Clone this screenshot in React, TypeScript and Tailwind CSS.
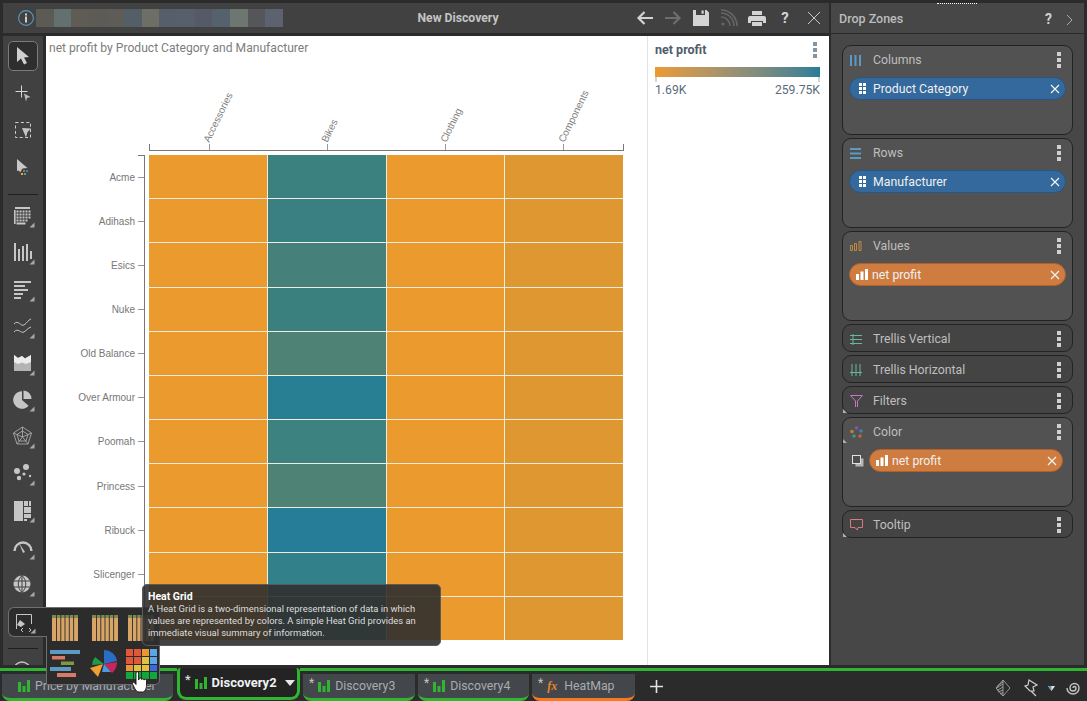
import React from "react";

const ui = "font-['Roboto',sans-serif]";

const rows = [
  ["Acme", "bg-[#3b8180]"],
  ["Adihash", "bg-[#3a8082]"],
  ["Esics", "bg-[#46807a]"],
  ["Nuke", "bg-[#3a807f]"],
  ["Old Balance", "bg-[#4e8275]"],
  ["Over Armour", "bg-[#287e92]"],
  ["Poomah", "bg-[#3b8280]"],
  ["Princess", "bg-[#4e8275]"],
  ["Ribuck", "bg-[#257d97]"],
  ["Slicenger", "bg-[#32808a]"],
  ["", "bg-[#3a8085]"],
];

const mosaic = ["#5c5a55", "#62716f", "#5f5c55", "#5c5b56", "#5e5c56", "#535e66", "#6f6e66", "#565e6a", "#565f6a", "#555a66", "#55626e", "#6e7672", "#54565a", "#5c6270"];

// every toolbar button has the little flyout triangle in its corner
function ToolIcon({ children, corner = true }: { children: React.ReactNode; corner?: boolean }) {
  return (
    <svg width="24" height="24" viewBox="0 0 24 24" fill="#c6c6c6" stroke="none">
      {children}
      {corner && <path d="M23.5 18.5v5h-5z" fill="#a8a8a8" />}
    </svg>
  );
}

function Slot({ children }: { children: React.ReactNode }) {
  return <div className="flex h-[36.9px] w-full shrink-0 items-center justify-center">{children}</div>;
}

function Toolbar() {
  return (
    <div className="flex h-[629px] w-[40px] shrink-0 flex-col items-center overflow-hidden bg-[#414141] pt-[2px]">
      <Slot>
        <div className="flex h-[30px] w-[30px] items-center justify-center rounded-[5px] border border-[#7b7b7b] bg-[#2e2e2e]">
          <svg width="18" height="20" viewBox="0 0 18 20" fill="#cfcfcf">
            <path d="M3 1v15l4-3.5 3 6 3-1.5-3-5.5 5-.5z" />
          </svg>
        </div>
      </Slot>
      <Slot>
        <ToolIcon corner={false}>
          <path d="M10 4.500h1V10h5.500v1H11v5.500h-1V11H4.500v-1H10z" fill="#d8d8d8" />
          <path d="M13 12.500l6.500 3.500-3.500 1-1 3.500z" fill="#bcbcbc" />
        </ToolIcon>
      </Slot>
      <Slot>
        <ToolIcon corner={false}>
          <rect x="4.500" y="4.500" width="15" height="15" fill="none" stroke="#cfcfcf" strokeDasharray="3 2.4" />
          <path d="M11 10l9 .5-3.500 3.500-1.500 5.500z" fill="#c4c4c4" />
        </ToolIcon>
      </Slot>
      <Slot>
        <ToolIcon corner={false}>
          <path d="M6 4l10.500 9-5 .5-2.500 4-1-2-2 .5z" fill="#c8c8c8" />
          <rect x="12" y="15" width="2" height="2" fill="#c9604a" />
          <rect x="15" y="15" width="2" height="2" fill="#4a78b8" />
          <rect x="10" y="18" width="2" height="2" fill="#d8b24a" />
          <rect x="13" y="18" width="2" height="2" fill="#4aa878" />
        </ToolIcon>
      </Slot>
      <div className="mt-[8px] mb-[3px] h-px w-[30px] shrink-0 bg-[#1f1f1f]" />
      <Slot>
        <ToolIcon>
          <path d="M4 3h15v2H4zM3 6h1.600v14H3zM5.500 6.500h2v2h-2zM8.500 6.500h2v2h-2zM11.500 6.500h2v2h-2zM14.500 6.500h2v2h-2zM17.500 6.500h2v2h-2zM5.500 9.500h2v2h-2zM8.500 9.500h2v2h-2zM11.500 9.500h2v2h-2zM14.500 9.500h2v2h-2zM17.500 9.500h2v2h-2zM5.500 12.500h2v2h-2zM8.500 12.500h2v2h-2zM11.500 12.500h2v2h-2zM14.500 12.500h2v2h-2zM17.500 12.500h2v2h-2zM5.500 15.500h2v2h-2zM8.500 15.500h2v2h-2zM11.500 15.500h2v2h-2zM14.500 15.500h2v2h-2zM5.500 18.500h9v2h-9z" />
        </ToolIcon>
      </Slot>
      <Slot>
        <ToolIcon>
          <path d="M3 2h2v18H3zM7 8h2v12H7zM11 5h2v15h-2zM15 3h2v17h-2zM19 10h2v8h-2z" />
        </ToolIcon>
      </Slot>
      <Slot>
        <ToolIcon>
          <path d="M3 3h17v2H3zM3 7h11v2H3zM3 11h14v2H3zM3 15h9v2H3zM3 19h7v2H3z" />
        </ToolIcon>
      </Slot>
      <Slot>
        <ToolIcon>
          <path d="M3 9c4-5 7 3 10 1s4-5 7-6M3 17c4-5 7 2 10 0s4-4 7-5" fill="none" stroke="#c6c6c6" strokeWidth="1" />
        </ToolIcon>
      </Slot>
      <Slot>
        <ToolIcon>
          <path d="M3 3l4 3 4-2 3 2.500L20 3v16H3z" fill="#b4b4b4" />
          <path d="M3 3l4 3 4-2 3 2.500L20 3v7l-5 2-4-1.500-4 1.500-4-2z" fill="#ececec" />
        </ToolIcon>
      </Slot>
      <Slot>
        <ToolIcon>
          <path d="M11 3.200v8.800l6.600 5.800A8.800 8.800 0 1 1 11 3.200z" />
          <path d="M12.500 2.400a8.600 8.600 0 0 1 8 8.600h-8z" />
        </ToolIcon>
      </Slot>
      <Slot>
        <ToolIcon>
          <path d="M11.500 2l9 6-3.500 11H6L2.500 8zM11.500 6l5.500 3.500-2 6.500H8L6 9.500zM11.500 2v10M2.500 8l9 4 9-4M6 19l5.500-7 5.500 7" fill="none" stroke="#a8a8a8" strokeWidth="0.9" />
        </ToolIcon>
      </Slot>
      <Slot>
        <ToolIcon>
          <circle cx="6" cy="9" r="3" />
          <circle cx="15" cy="5" r="3" />
          <circle cx="8" cy="16" r="2.200" />
          <circle cx="13" cy="12" r="1.600" />
          <circle cx="19" cy="14" r="1.200" />
        </ToolIcon>
      </Slot>
      <Slot>
        <ToolIcon>
          <path d="M3 2h9v20H3zM13 2h4v5h-4zM18 2h2v5h-2zM13 8h7v6h-7zM13 15h7v4h-7zM13 20h3v2h-3z" />
        </ToolIcon>
      </Slot>
      <Slot>
        <ToolIcon>
          <path d="M3.500 15a8.500 8.500 0 0 1 17 0" fill="none" stroke="#c6c6c6" strokeWidth="2.400" />
          <path d="M8 7l6 9-2 1z" />
        </ToolIcon>
      </Slot>
      <Slot>
        <ToolIcon>
          <circle cx="11" cy="11" r="8.500" />
          <path d="M11 2.500c-5 5-5 12 0 17M11 2.500c5 5 5 12 0 17M11 2.500v17M2.500 8h17M2.500 14h17" fill="none" stroke="#414141" strokeWidth="1" />
        </ToolIcon>
      </Slot>
      <Slot>
        <span />
      </Slot>
      <div className="mt-[8px] mb-[3px] h-px w-[30px] shrink-0 bg-[#1f1f1f]" />
      <Slot>
        <ToolIcon>
          <circle cx="11" cy="11" r="8" fill="none" stroke="#c6c6c6" strokeWidth="1.400" />
        </ToolIcon>
      </Slot>
    </div>
  );
}

function Chart() {
  const cols = ["Accessories", "Bikes", "Clothing", "Components"];
  return (
    <div className="flex h-[629px] w-[783px] bg-white">
      <div className="w-[601px] shrink-0">
        <div className={`${ui} pl-[3px] pt-[4px] text-[12.1px] leading-[17px] text-[#7d7d7d]`}>
          net profit by Product Category and Manufacturer
        </div>
        <div className="ml-[103px] mt-[87px] w-[475px] font-['Liberation_Sans',sans-serif] text-[10px] text-[#808080]">
          <div className="grid h-[7px] grid-cols-4 border-x border-b border-[#777]">
            {cols.map((c) => (
              <div key={c} className="relative flex justify-center">
                <div className="h-full w-px bg-[#999]" />
                <span className="absolute bottom-[6px] left-[calc(50%+2px)] origin-bottom-left -rotate-[64deg] whitespace-nowrap leading-none">
                  {c}
                </span>
              </div>
            ))}
          </div>
        </div>
        <div className="mt-[4px] flex">
          <div className="relative w-[99px] shrink-0 border-r border-[#777] font-['Liberation_Sans',sans-serif] text-[10px] text-[#777]">
            <div className="absolute right-0 top-0 h-px w-[6px] bg-[#777]" />
            {rows.map(([name]) => (
              <div key={name || "last"} className="flex h-[44.15px] items-center justify-end gap-[3px]">
                <span>{name}</span>
                <div className="h-px w-[6px] bg-[#999]" />
              </div>
            ))}
          </div>
          <div className="ml-[4px] grid h-[485px] w-[474px] shrink-0 grid-cols-4 gap-px bg-[#f1ece2]">
            {rows.map(([name, color]) => (
              <React.Fragment key={name || "last"}>
                <div className="bg-[#eb9a2e]" />
                <div className={color} />
                <div className="bg-[#eb9a2e]" />
                <div className="bg-[#df9732]" />
              </React.Fragment>
            ))}
          </div>
        </div>
      </div>
      <div className={`${ui} h-full w-[182px] border-l border-[#e4e4e4] pl-[7px] pr-[12px] pt-[5px]`}>
        <div className="flex items-center justify-between">
          <span className="text-[12.5px] leading-[17px] font-bold text-[#4f5d6b]">net profit</span>
          <Kebab color="#8394a3" />
        </div>
        <div className="mt-[9px] h-[10px] w-[165px] bg-gradient-to-r from-[#eb9a2e] to-[#257d97]" />
        <div className="flex w-[165px] justify-between">
          <div className="h-[5px] w-[2px] bg-[#d5d5d5]" />
          <div className="h-[5px] w-[2px] bg-[#d5d5d5]" />
        </div>
        <div className="flex w-[165px] justify-between text-[12.2px] leading-[16px] text-[#5b6b7b]">
          <span>1.69K</span>
          <span>259.75K</span>
        </div>
      </div>
    </div>
  );
}

function Kebab({ color = "#d0d0d0" }: { color?: string }) {
  return (
    <svg width="4" height="16" viewBox="0 0 4 16" fill={color}>
      <rect y="0" width="4" height="4" />
      <rect y="6" width="4" height="4" />
      <rect y="12" width="4" height="4" />
    </svg>
  );
}

function Header() {
  return (
    <div className={`${ui} relative flex h-[30px] items-center bg-[#414141] pl-[15px] pr-[8px]`}>
      <svg width="16" height="16" viewBox="0 0 16 16" className="shrink-0">
        <circle cx="8" cy="8" r="7.400" fill="none" stroke="#5b97bf" strokeWidth="1.100" />
        <rect x="7" y="3.500" width="2" height="2" fill="#cfcfcf" />
        <rect x="7" y="6.500" width="2" height="6" fill="#cfcfcf" />
      </svg>
      <div className="ml-[2px] flex h-[18px] w-[247px] shrink-0">
        {mosaic.map((c) => (
          <div key={c} className="h-full flex-1" style={{ background: c }} />
        ))}
      </div>
      <div className="flex-1 pr-[3px] pt-[1px] text-center text-[12.2px] font-bold text-[#c4c4c4]">New Discovery</div>
      <div className="flex items-center gap-[10px]">
        <svg width="18" height="16" viewBox="0 0 18 16" fill="none" stroke="#d2d2d2" strokeWidth="2.200">
          <path d="M17 8H3M8.500 2L2.500 8l6 6" />
        </svg>
        <svg width="18" height="16" viewBox="0 0 18 16" fill="none" stroke="#6d6d6d" strokeWidth="2.200">
          <path d="M1 8h14M9.500 2l6 6-6 6" />
        </svg>
        <svg width="18" height="18" viewBox="0 0 18 18" fill="#d4d4d4">
          <path d="M1 1h3v5h9V1h1.500L17 3.500V17H1zM9.500 1.500h2.200v3.200H9.500z" />
        </svg>
        <svg width="18" height="18" viewBox="0 0 18 18" fill="none" stroke="#666" strokeWidth="1.600">
          <circle cx="3" cy="15" r="1.600" fill="#666" stroke="none" />
          <path d="M1 8a9 9 0 0 1 9 9M1 4a13 13 0 0 1 13 13M1 1a16 16 0 0 1 16 16" />
        </svg>
        <svg width="18" height="17" viewBox="0 0 18 17" fill="#d4d4d4">
          <path d="M4 1h10v4H4zM2 6h14a2 2 0 0 1 2 2v5h-3v-2H3v2H0V8a2 2 0 0 1 2-2zM4 12h10v4H4z" />
        </svg>
        <span className="w-[18px] text-center text-[15px] leading-none font-bold text-[#d4d4d4]">?</span>
        <svg width="14" height="14" viewBox="0 0 14 14" stroke="#c8c8c8" strokeWidth="1" className="ml-[3px]">
          <path d="M1 1l12 12M13 1L1 13" />
        </svg>
      </div>
    </div>
  );
}

function Pill({ label, tone, grip }: { label: string; tone: "blue" | "orange"; grip?: boolean }) {
  const colors = tone === "blue" ? "bg-[#33699c] border-[#2a5580]" : "bg-[#cf7c41] border-[#b2602c]";
  return (
    <div className={`flex h-[23px] flex-1 items-center rounded-full border pl-[7px] pr-[5px] ${colors}`}>
      {grip ? (
        <svg width="9" height="11" viewBox="0 0 9 11" fill="#fff" className="mr-[6px] ml-[1px]">
          <path d="M1 0h3v3H1zM5 0h3v3H5zM1 4h3v3H1zM5 4h3v3H5zM1 8h3v3H1zM5 8h3v3H5z" />
        </svg>
      ) : (
        <svg width="12" height="11" viewBox="0 0 12 11" fill="#fff" className="mr-[4px] ml-[-1px]">
          <path d="M0 5h3v6H0zM4.500 2.500h3V11h-3zM9 0h3v11H9z" />
        </svg>
      )}
      <span className="flex-1 pt-[1px] text-[12.3px] leading-none text-[#f0f0f0]">{label}</span>
      <svg width="10" height="10" viewBox="0 0 10 10" stroke="#f4f4f4" strokeWidth="1.200">
        <path d="M1 1l8 8M9 1L1 9" />
      </svg>
    </div>
  );
}

function Zone({
  label,
  icon,
  children,
  corner,
}: {
  label: string;
  icon: React.ReactNode;
  children?: React.ReactNode;
  corner?: boolean;
}) {
  const big = !!children;
  return (
    <div className={`relative rounded-[9px] border border-[#232323] px-[6px] ${big ? "h-[90px] bg-[#525252]" : "h-[28px] bg-[#444444]"}`}>
      <div className="flex h-[28px] items-center">
        <div className="flex w-[24px] shrink-0 items-center pl-[1px]">{icon}</div>
        <span className="flex-1 text-[12.3px] text-[#bfbfbf]">{label}</span>
        <div className="pr-[5px]">
          <Kebab />
        </div>
      </div>
      {big && <div className="mt-[3px] flex items-center">{children}</div>}
      {corner && (
        <div className={`absolute left-0 h-0 w-0 border-t-[4px] border-r-[4px] border-l-[4px] border-t-transparent border-r-transparent border-l-[#b0b0b0] ${big ? "top-[21px]" : "bottom-0"}`} />
      )}
    </div>
  );
}

function DropZones() {
  return (
    <div className={`${ui} relative h-[662px] w-[253px] shrink-0 bg-[#474747]`}>
      <div className="absolute top-0 left-[106px] h-[2px] w-[40px] border-t border-dotted border-white" />
      <div className="flex h-[31px] items-center border-b border-[#2a2a2a] pl-[8px] pr-[11px] pt-[3px]">
        <span className="flex-1 text-[12.5px] font-medium text-[#bcbcbc]">Drop Zones</span>
        <span className="mr-[14px] text-[14px] font-bold text-[#d0d0d0]">?</span>
        <svg width="7" height="12" viewBox="0 0 7 12" fill="none" stroke="#a8a8a8" strokeWidth="1">
          <path d="M1 1l5 5-5 5" />
        </svg>
      </div>
      <div className="ml-[11px] mt-[11px] flex w-[231px] flex-col gap-[3px]">
        <Zone
          label="Columns"
          icon={
            <svg width="11" height="11" viewBox="0 0 11 11" fill="#5c9ac4">
              <path d="M0 0h2v11H0zM4.500 0h2v11h-2zM9 0h2v11H9z" />
            </svg>
          }
        >
          <Pill label="Product Category" tone="blue" grip />
        </Zone>
        <Zone
          label="Rows"
          icon={
            <svg width="11" height="11" viewBox="0 0 11 11" fill="#5c9ac4">
              <path d="M0 0h11v2H0zM0 4.500h11v2H0zM0 9h11v2H0z" />
            </svg>
          }
        >
          <Pill label="Manufacturer" tone="blue" grip />
        </Zone>
        <Zone
          label="Values"
          icon={
            <svg width="12" height="10" viewBox="0 0 12 10" fill="none" stroke="#c08a45" strokeWidth="1">
              <path d="M.5 4.500h2v5h-2zM4.500 2.500h2v7h-2zM9 .5h2v9H9z" />
            </svg>
          }
        >
          <Pill label="net profit" tone="orange" />
        </Zone>
        <Zone
          label="Trellis Vertical"
          icon={
            <svg width="12" height="11" viewBox="0 0 12 11" fill="none" stroke="#69b79c" strokeWidth="1">
              <path d="M0 1.500h12M0 5.500h12M0 9.500h12M3 0v11" />
            </svg>
          }
        />
        <Zone
          label="Trellis Horizontal"
          icon={
            <svg width="12" height="12" viewBox="0 0 12 12" fill="none" stroke="#69b79c" strokeWidth="1">
              <path d="M2 0v12M6 0v12M10 0v12M0 8.500h12" />
            </svg>
          }
        />
        <Zone
          label="Filters"
          corner
          icon={
            <svg width="13" height="12" viewBox="0 0 13 12" fill="none" stroke="#c278c4" strokeWidth="1">
              <path d="M.5.5h12L7.500 6v6M5.500 12V6L.5.5" />
            </svg>
          }
        />
        <Zone
          label="Color"
          corner
          icon={
            <svg width="13" height="12" viewBox="0 0 13 12">
              <circle cx="6.500" cy="2" r="1.800" fill="#7e5aa8" />
              <circle cx="11" cy="5" r="1.800" fill="#4d7ab0" />
              <circle cx="2" cy="5.500" r="1.800" fill="#b8843c" />
              <circle cx="10" cy="10" r="1.800" fill="#c4623c" />
              <circle cx="4" cy="10" r="1.800" fill="#4f9278" />
            </svg>
          }
        >
          <svg width="12" height="12" viewBox="0 0 12 12" className="mr-[5px] ml-[3px] shrink-0">
            <rect x="3.500" y="3.500" width="8" height="8" fill="#b4b4b4" />
            <rect x=".5" y=".5" width="8" height="8" fill="#4d4d4d" stroke="#e2e2e2" />
          </svg>
          <div className="mr-[3px] flex flex-1">
            <Pill label="net profit" tone="orange" />
          </div>
        </Zone>
        <Zone
          label="Tooltip"
          corner
          icon={
            <svg width="13" height="12" viewBox="0 0 13 12" fill="none" stroke="#d77b7b" strokeWidth="1">
              <path d="M.5.5h12v8H8l-1 2.500-2-2.500H.5z" />
            </svg>
          }
        />
      </div>
    </div>
  );
}

function BarIcon() {
  return (
    <svg width="12" height="12" viewBox="0 0 12 12" fill="#2fb52f" className="shrink-0">
      <path d="M0 2h3v10H0zM4.500 6h3v6h-3zM9 0h3v12H9z" />
    </svg>
  );
}

function Tab({ label, widthClass, orange, star = true }: { label: string; widthClass: string; orange?: boolean; star?: boolean }) {
  return (
    <div
      className={`flex h-[27px] shrink-0 items-center rounded-b-[8px] border-b-[3px] bg-[#43464a] ${star ? "pl-[6px]" : "pl-[16px]"} ${widthClass} ${orange ? "border-[#f47a20]" : "border-[#2fb52f]"}`}
    >
      {star && <span className="mr-[4px] mt-[-6px] text-[12px] leading-none text-[#c4c4c4]">*</span>}
      {orange ? (
        <span className="mr-[7px] font-['Liberation_Serif',serif] text-[12px] font-bold italic leading-none text-[#e8842c]">fx</span>
      ) : (
        <span className="mr-[5px]">
          <BarIcon />
        </span>
      )}
      <span className="whitespace-nowrap text-[12.3px] text-[#a9acb0]">{label}</span>
    </div>
  );
}

function TabBar() {
  return (
    <div className={`${ui} mt-[3px] flex h-[33px]`}>
      <div className="w-[177px] shrink-0 border-t-[3px] border-[#2fb52f] pl-[2px] pt-[3px]">
        <Tab label="Price by Manufacturer" widthClass="w-[171px]" star={false} />
      </div>
      <div className="flex h-[32px] w-[123px] shrink-0 items-center rounded-b-[9px] rounded-t-[4px] border-x-[3px] border-b-[3px] border-[#2fb52f] bg-[#232323] pl-[5px]">
        <span className="mr-[4px] mt-[-6px] text-[13px] leading-none text-[#e8e8e8]">*</span>
        <span className="mr-[5px]">
          <BarIcon />
        </span>
        <span className="text-[13px] font-bold text-[#eef1f4]">Discovery2</span>
        <svg width="10" height="6" viewBox="0 0 10 6" fill="#e8e8e8" className="ml-[8px]">
          <path d="M0 0h10L5 6z" />
        </svg>
      </div>
      <div className="flex flex-1 items-start gap-[3px] border-t-[3px] border-[#2fb52f] pl-[3px] pt-[3px]">
        <Tab label="Discovery3" widthClass="w-[112px]" />
        <Tab label="Discovery4" widthClass="w-[111px]" />
        <Tab label="HeatMap" widthClass="w-[103px]" orange />
        <svg width="13" height="13" viewBox="0 0 13 13" stroke="#e4e4e4" strokeWidth="1.600" className="ml-[12px] mt-[6px]">
          <path d="M6.500 0v13M0 6.500h13" />
        </svg>
        <div className="ml-auto mr-[6px] mt-[5px] flex items-center">
          <svg width="16" height="18" viewBox="0 0 16 18" fill="none" stroke="#b0b0b0" strokeWidth="0.800">
            <path d="M8 1v16M8 1l7 8-7 8M8 1L1 9l7 8M2 7.500L8 3M1 9.500L8 5M2 11.500L8 8M3 13L8 11M5 15l3-1.500" />
          </svg>
          <svg width="18" height="18" viewBox="0 0 18 18" fill="none" stroke="#cfcfcf" strokeWidth="1.200" className="ml-[11px]">
            <path d="M7 1l8 5-4 2 1 4-4 0-5-5 3-1zM9 12l5 5" />
          </svg>
          <svg width="7" height="5" viewBox="0 0 7 5" className="ml-[8px]">
            <path d="M0 0h7L3.500 5z" fill="#e8e8e8" />
            <path d="M0 0h3.500v5z" fill="#5b97bf" />
          </svg>
          <svg width="16" height="18" viewBox="0 0 16 18" fill="none" stroke="#c4c4c4" strokeWidth="1.400" className="ml-[10px]">
            <path d="M8 9a1.500 1.500 0 0 1 3 0a3 3 0 0 1-6 0a4.500 4.500 0 0 1 9 0a6 6 0 0 1-12 0" />
          </svg>
        </div>
      </div>
    </div>
  );
}

function MiniBars() {
  return (
    <svg width="26" height="26" viewBox="0 0 26 26">
      <rect width="26" height="3" fill="#7d8a4f" />
      <rect y="3" width="26" height="23" fill="#d9a566" />
      <path d="M4.500 0v26M8.800 0v26M13 0v26M17.300 0v26M21.600 0v26" stroke="#2b2b2b" strokeWidth="0.900" />
    </svg>
  );
}

function Flyout() {
  const heat = [
    "#e0573a", "#e0573a", "#e89a30", "#5aa6e8",
    "#e0573a", "#e0573a", "#e0c23c", "#5aa6e8",
    "#f0923a", "#e0c23c", "#e0c23c", "#3d68e0",
    "#10a83c", "#10a83c", "#10a83c", "#10a83c",
  ];
  return (
    <>
      <div className="absolute left-[46px] top-[607px] z-10 flex h-[78px] w-[114px] flex-col gap-[8px] rounded-br-[5px] rounded-tr-[5px] border border-[#6f6f6f] bg-[#2c2c2c] pl-[5px] pt-[7px]">
        <div className="flex gap-[14px]">
          <MiniBars />
          <MiniBars />
          <div className="-ml-[4px]">
            <MiniBars />
          </div>
        </div>
        <div className="-ml-[2px] flex items-center gap-[7px]">
          <svg width="32" height="30" viewBox="0 0 32 30">
            <rect x="0" y="1" width="30" height="4" fill="#5c9ac4" />
            <rect x="2" y="7" width="13" height="3.500" fill="#d77a68" />
            <rect x="11" y="12.500" width="13" height="3.500" fill="#7f9a3c" />
            <rect x="0" y="18" width="21" height="4" fill="#5c9ac4" />
            <rect x="7" y="24" width="19" height="4" fill="#d77a68" />
          </svg>
          <svg width="30" height="30" viewBox="0 0 30 30">
            <path d="M15 15V1a13 13 0 0 1 13 11z" fill="#2b6cc4" />
            <path d="M15 15l13-2a14 14 0 0 1-5 11z" fill="#c9245c" />
            <path d="M15 15l7 8-9 0z" fill="#4a9ae0" />
            <path d="M14 15L1 19l8 9z" fill="#f0a030" />
            <path d="M15 15L6 8a14 14 0 0 0-3 8z" fill="#1f9a4a" />
          </svg>
          <div className="grid h-[30px] w-[31px] grid-cols-4 gap-px">
            {heat.map((c, i) => (
              <div key={i} style={{ background: c }} />
            ))}
          </div>
        </div>
      </div>
      <div className="absolute left-[8px] top-[607px] z-20 flex h-[30px] w-[39px] items-center justify-center rounded-l-[6px] border border-r-0 border-[#6f6f6f] bg-[#2c2c2c] pr-[8px]">
        <svg width="24" height="24" viewBox="0 0 24 24" fill="none" stroke="#c6c6c6">
          <path d="M4.500 19V4.500h15V14" strokeWidth="1" />
          <path d="M5 15l3-5 5 4-4 3z" fill="#c6c6c6" stroke="none" />
          <path d="M11 18l-2 2 2 2M17 18l2 2-2 2" strokeWidth="1" />
          <path d="M23.500 18.500v5h-5z" fill="#a8a8a8" stroke="none" />
        </svg>
      </div>
      <div className={`${ui} absolute left-[142px] top-[584px] z-30 h-[62px] w-[299px] rounded-[5px] border border-[#5a5a5a] bg-[#2f2f2f]/90 px-[5px] pt-[6px] text-[9.4px] leading-[12px] text-[#dedede]`}>
        <div className="text-[10.5px] font-bold text-white">Heat Grid</div>
        <div>
          A Heat Grid is a two-dimensional representation of data in which values are represented by colors. A simple Heat Grid provides an immediate visual summary of information.
        </div>
      </div>
      <svg width="18" height="22" viewBox="0 0 18 22" className="absolute left-[131px] top-[671px] z-40">
        <path
          d="M5 2a1.300 1.300 0 0 1 2.600 0v7l.4-1a1.200 1.200 0 0 1 2.400.2l.2.3a1.200 1.200 0 0 1 2.300.4l.2.200a1.200 1.200 0 0 1 2.400.5v5c0 3-1.500 6.400-4 6.400H8c-2 0-3-1.500-4-3L1.500 13c-.8-1.400.9-2.400 2-1.300L5 13.500z"
          fill="#fff"
          stroke="#111"
          strokeWidth="0.900"
        />
      </svg>
    </>
  );
}

export default function App() {
  return (
    <div className="relative h-[701px] w-[1087px] overflow-hidden bg-[#2b2b2b]">
      <div className="flex h-[665px] pt-[3px]">
        <div className="ml-[3px] w-[826px] shrink-0">
          <Header />
          <div className="mt-[3px] flex gap-[3px]">
            <Toolbar />
            <Chart />
          </div>
        </div>
        <div className="ml-[2px]">
          <DropZones />
        </div>
      </div>
      <TabBar />
      <Flyout />
    </div>
  );
}
